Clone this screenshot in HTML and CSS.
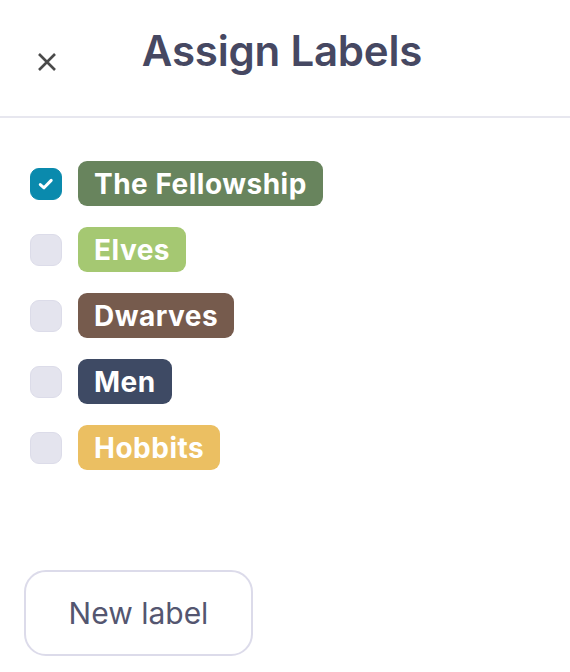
FILE: index.html
```html
<!DOCTYPE html>
<html lang="en">
<head>
<meta charset="utf-8">
<title>Assign Labels</title>
<link rel="stylesheet" href="styles.css">
</head>
<body>
<div class="sheet">
  <header class="header">
    <button class="close" aria-label="Close">
      <svg width="20" height="20" viewBox="0 0 20 20"><path d="M2 2 L18 18 M18 2 L2 18" stroke="#4a4a4a" stroke-width="2.6" stroke-linecap="butt" fill="none"/></svg>
    </button>
    <h1 class="title">Assign Labels</h1>
    <span class="spacer"></span>
  </header>
  <ul class="labels">
    <li class="row">
      <span class="check checked">
        <svg width="16" height="16" viewBox="0 0 16 16"><path d="M2.3 8.6 L6 11.8 L13.2 4.4" stroke="#fff" stroke-width="3" stroke-linecap="round" stroke-linejoin="round" fill="none"/></svg>
      </span>
      <span class="pill fellowship">The Fellowship</span>
    </li>
    <li class="row">
      <span class="check"></span>
      <span class="pill elves">Elves</span>
    </li>
    <li class="row">
      <span class="check"></span>
      <span class="pill dwarves">Dwarves</span>
    </li>
    <li class="row">
      <span class="check"></span>
      <span class="pill men">Men</span>
    </li>
    <li class="row">
      <span class="check"></span>
      <span class="pill hobbits">Hobbits</span>
    </li>
  </ul>
  <div class="footer">
    <button class="new-label">New label</button>
  </div>
</div>
</body>
</html>
```
FILE: styles.css
```css
* { box-sizing: border-box; }
html, body {
  margin: 0;
  padding: 0;
  background: #ffffff;
  font-family: Inter, "Noto Sans", sans-serif;
}
.sheet {
  width: 570px;
  height: 672px;
  display: flex;
  flex-direction: column;
}
.header {
  height: 118px;
  display: grid;
  grid-template-columns: 1fr auto 1fr;
  align-items: start;
  border-bottom: 2px solid #e7e7ef;
}
.close {
  justify-self: start;
  margin: 52px 0 0 37px;
  padding: 0;
  width: 20px;
  height: 20px;
  border: 0;
  background: none;
  display: flex;
}
.title {
  margin: 0 6px 0 0;
  padding-top: 25px;
  font-size: 42px;
  font-weight: 600;
  line-height: 52px;
  color: #464862;
  letter-spacing: -0.2px;
}
.labels {
  list-style: none;
  margin: 0;
  padding: 43px 0 0 30px;
  display: flex;
  flex-direction: column;
  gap: 21px;
}
.row {
  display: flex;
  align-items: center;
  gap: 16px;
}
.check {
  width: 32px;
  height: 32px;
  border-radius: 9px;
  background: #e4e4ee;
  border: 1.5px solid #dcdce9;
  display: flex;
  align-items: center;
  justify-content: center;
}
.check.checked {
  background: #0a8aad;
  border-color: #0a8aad;
}
.pill {
  height: 45px;
  display: inline-flex;
  align-items: center;
  padding: 0 16px;
  border-radius: 9px;
  color: #ffffff;
  font-size: 28px;
  font-weight: 700;
  letter-spacing: 0.5px;
}
.fellowship { background: #68845d; }
.elves { background: #a5c872; }
.dwarves { background: #765b4d; }
.men { background: #3e4a64; }
.hobbits { background: #ebbf62; }
.footer {
  padding: 100px 0 0 24px;
}
.new-label {
  width: 229px;
  height: 86px;
  border: 2px solid #dcdbea;
  border-radius: 22px;
  background: #ffffff;
  font-family: Inter, "Noto Sans", sans-serif;
  font-size: 30px;
  font-weight: 400;
  color: #545670;
  padding: 0;
}
```
